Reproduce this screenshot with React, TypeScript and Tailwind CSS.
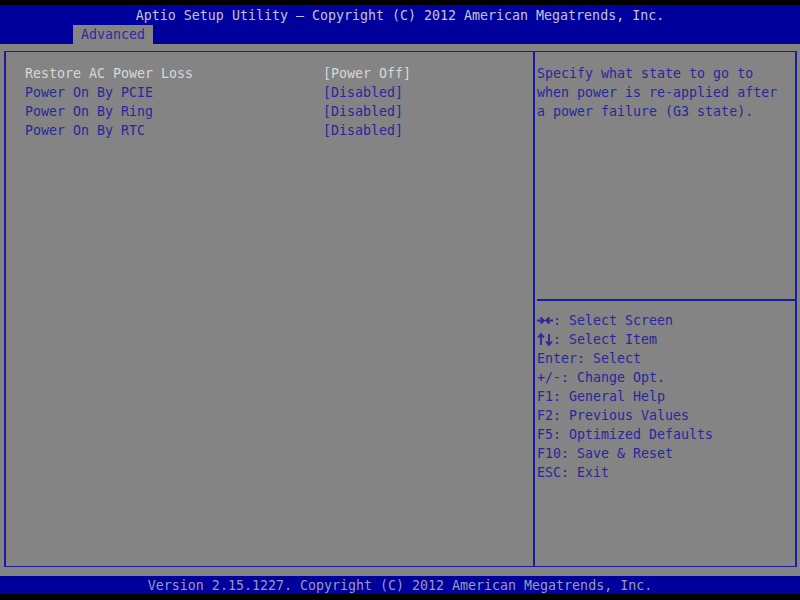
const items = [
  { label: 'Restore AC Power Loss', value: '[Power Off]', selected: true },
  { label: 'Power On By PCIE', value: '[Disabled]' },
  { label: 'Power On By Ring', value: '[Disabled]' },
  { label: 'Power On By RTC', value: '[Disabled]' },
]

const keys = [
  'Enter: Select',
  '+/-: Change Opt.',
  'F1: General Help',
  'F2: Previous Values',
  'F5: Optimized Defaults',
  'F10: Save & Reset',
  'ESC: Exit',
]

// 8x19 cell arrows, drawn like the bios font glyphs
const arrowPaths: Record<string, string> = {
  right: 'M0 9.5H6.5M3.5 6.5L6.8 9.5L3.5 12.5',
  left: 'M8 9.5H1.5M4.5 6.5L1.2 9.5L4.5 12.5',
  up: 'M4 15V4.5M1 7.5L4 4.2L7 7.5',
  down: 'M4 4V14.5M1 11.5L4 14.8L7 11.5',
}

function Arrow({ dir }: { dir: string }) {
  return (
    <svg width="8" height="19" viewBox="0 0 8 19" className="shrink-0">
      <path d={arrowPaths[dir]} fill="none" stroke="currentColor" strokeWidth="1.8" />
    </svg>
  )
}

export default function App() {
  return (
    <div
      className="w-[800px] h-[600px] bg-black flex flex-col pt-[5px] pb-[6px] text-[13.3px] leading-[19px] whitespace-pre"
      style={{ fontFamily: '"DejaVu Sans Mono", "Liberation Mono", monospace' }}
    >
      {/* header */}
      <div className="h-[39px] bg-[#00009c] flex flex-col">
        <div className="h-[20px] flex justify-center items-center text-[#c4c4d8]">
          Aptio Setup Utility – Copyright (C) 2012 American Megatrends, Inc.
        </div>
        <div className="h-[19px] pl-[73px] flex">
          <div className="w-[80px] h-[19px] bg-[#848484] px-2 text-[#2c2c98]">Advanced</div>
        </div>
      </div>

      {/* body */}
      <div className="flex-1 bg-[#848484] pt-[7px] pl-[4px] pr-[3px] pb-[9px] flex">
        <div className="flex-1 border-[2px] border-t-[1px] border-b-[1px] border-[#1c1ca0] flex">
          <div className="w-[527px] pt-[12px] pl-[19px] flex flex-col">
            {items.map(it => (
              <div key={it.label} className="flex">
                <span className={`w-[298px] ${it.selected ? 'text-[#d8d8d8]' : 'text-[#28289a]'}`}>{it.label}</span>
                <span className={it.selected ? 'text-[#d8d8d8]' : 'text-[#28289a]'}>{it.value}</span>
              </div>
            ))}
          </div>

          <div className="flex-1 border-l-[2px] border-[#1c1ca0] flex flex-col text-[#28289c]">
            <div className="h-[247px] pt-[12px] pl-[2px]">
              <div>Specify what state to go to</div>
              <div>when power is re-applied after</div>
              <div>a power failure (G3 state).</div>
            </div>
            <div className="ml-[2px] h-[2px] bg-[#1c1ca0]" />
            <div className="pt-[10px] pl-[2px] flex flex-col">
              <div className="flex">
                <Arrow dir="right" />
                <Arrow dir="left" />
                <span>: Select Screen</span>
              </div>
              <div className="flex">
                <Arrow dir="up" />
                <Arrow dir="down" />
                <span>: Select Item</span>
              </div>
              {keys.map(k => (
                <div key={k}>{k}</div>
              ))}
            </div>
          </div>
        </div>
      </div>

      {/* footer */}
      <div className="h-[18px] bg-[#00009c] flex justify-center items-center text-[#9a9ab6]">
        Version 2.15.1227. Copyright (C) 2012 American Megatrends, Inc.
      </div>
    </div>
  )
}
